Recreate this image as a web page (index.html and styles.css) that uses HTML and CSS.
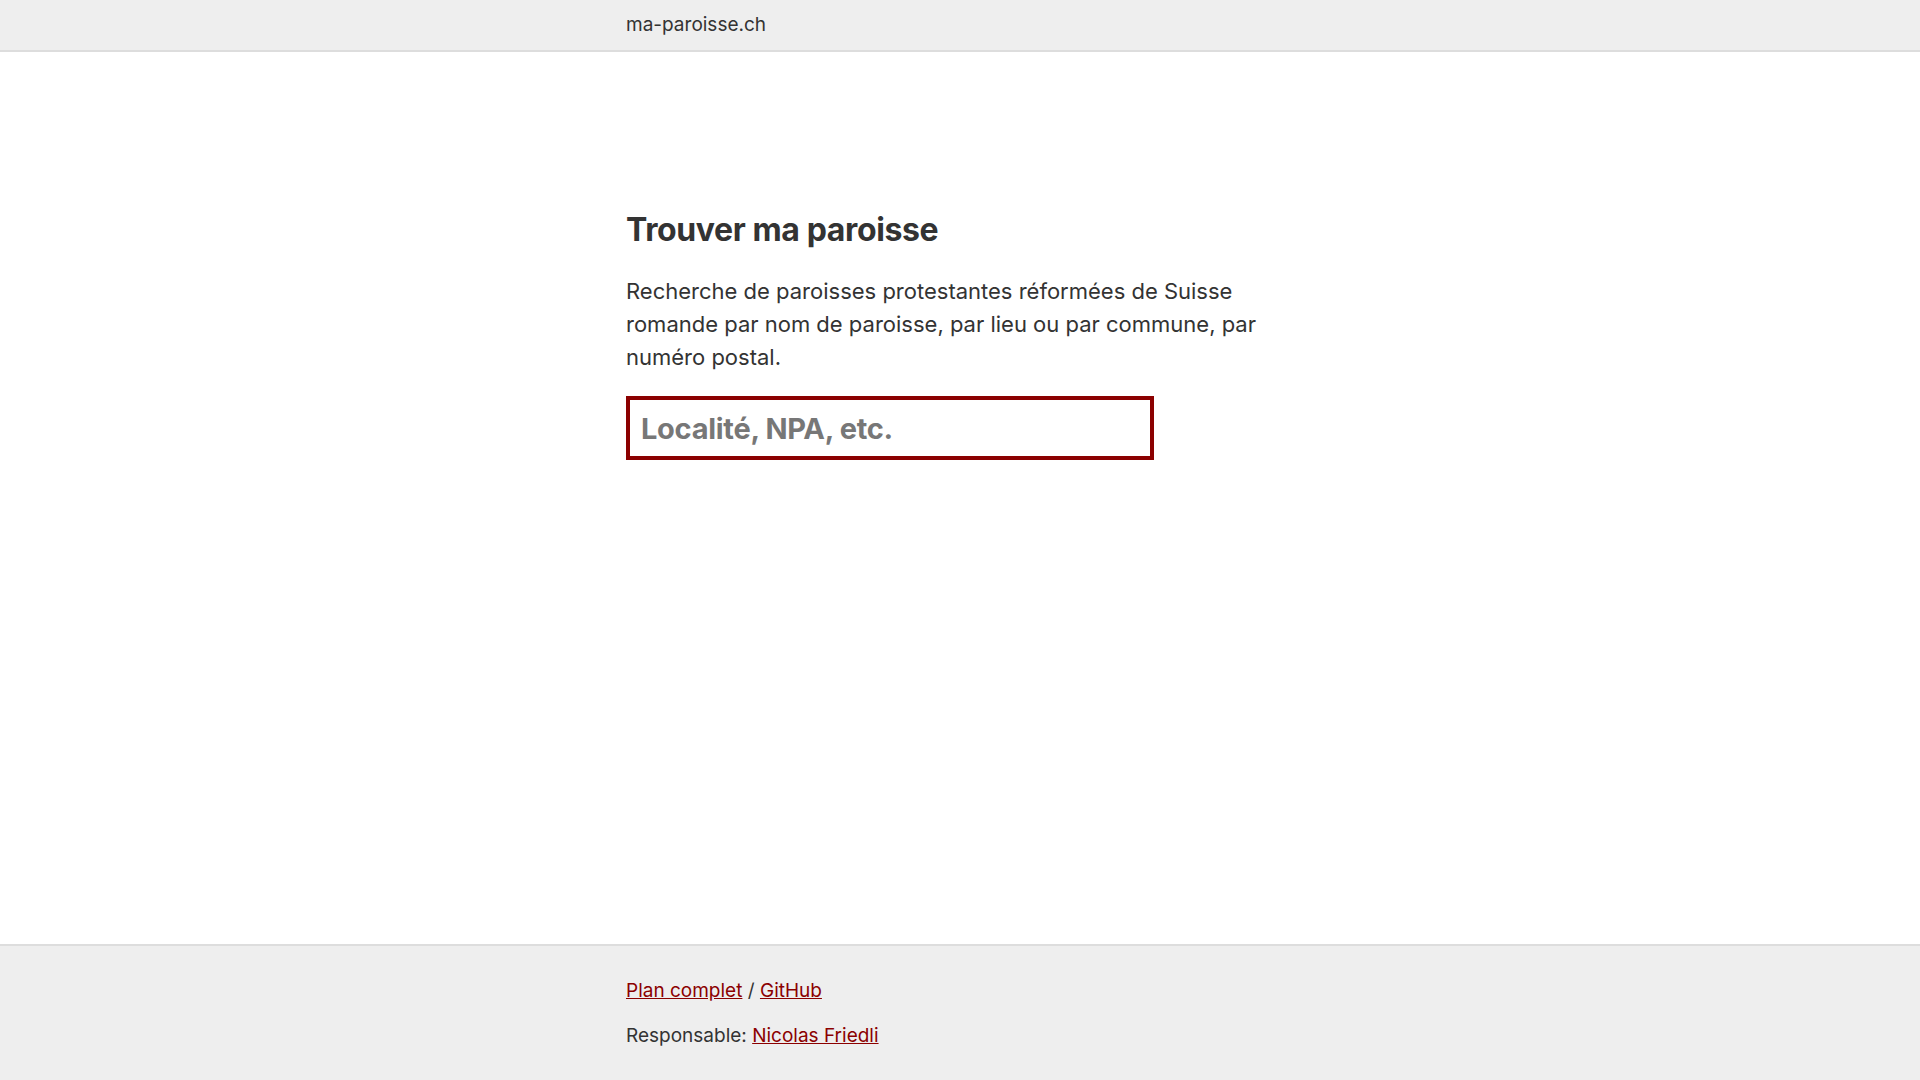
FILE: index.html
```html
<!DOCTYPE html>
<html lang="fr">
<head>
<meta charset="utf-8">
<title>ma-paroisse.ch</title>
<link rel="stylesheet" href="styles.css">
</head>
<body>
<header class="site-header">
  <div class="container">ma-paroisse.ch</div>
</header>
<main class="site-main">
  <div class="container">
    <h1 class="title">Trouver ma paroisse</h1>
    <p class="intro">Recherche de paroisses protestantes réformées de Suisse romande par nom de paroisse, par lieu ou par commune, par numéro postal.</p>
    <input class="search" type="text" placeholder="Localité, NPA, etc.">
  </div>
</main>
<footer class="site-footer">
  <div class="container">
    <p class="foot-line"><a href="#">Plan complet</a> / <a href="#">GitHub</a></p>
    <p class="foot-line">Responsable: <a href="#">Nicolas Friedli</a></p>
  </div>
</footer>
</body>
</html>
```

FILE: styles.css
```css
* { box-sizing: border-box; }
html, body { margin: 0; padding: 0; }
body {
  font-family: Inter, "Noto Sans", sans-serif;
  color: #333;
  background: #fff;
  min-height: 100vh;
  display: flex;
  flex-direction: column;
}
.container {
  width: 668px;
  margin: 0 auto;
}
.site-header {
  background: #eee;
  border-bottom: 2px solid #ddd;
  height: 52px;
  font-size: 19px;
  line-height: 50px;
}
.site-main {
  flex: 1;
  padding-top: 158px;
}
.title {
  margin: 0;
  font-size: 32px;
  line-height: 40px;
  font-weight: 700;
  letter-spacing: -0.012em;
}
.intro {
  margin: 25px 0 22px;
  font-size: 22px;
  line-height: 33px;
  letter-spacing: 0;
}
.search {
  display: block;
  width: 528px;
  height: 64px;
  border: 4px solid #8b0000;
  padding: 0 11px;
  font-family: Inter, "Noto Sans", sans-serif;
  font-size: 29px;
  font-weight: 700;
  letter-spacing: -0.01em;
  color: #333;
  outline: none;
  background: #fff;
  border-radius: 0;
}
.search::placeholder {
  color: #777;
  opacity: 1;
}
.site-footer {
  background: #eee;
  border-top: 2px solid #ddd;
  padding: 13px 0;
  font-size: 19px;
  line-height: 27px;
}
.foot-line { margin: 18px 0; }
.foot-line a { color: #8b0000; }
```
